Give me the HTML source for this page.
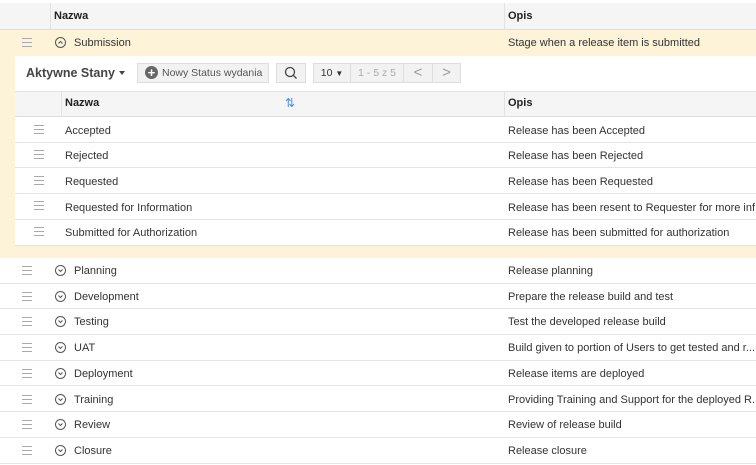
<!DOCTYPE html>
<html><head><style>
*{box-sizing:border-box;margin:0;padding:0}
body{width:756px;height:465px;background:#fff;font-family:"Liberation Sans",sans-serif;font-size:11px;color:#333;position:relative;overflow:hidden}
.a{position:absolute;white-space:nowrap}
.ham{position:absolute;width:10px;height:9px;border-top:1px solid #aaa;border-bottom:1px solid #aaa}
.ham:after{content:"";position:absolute;left:0;right:0;top:3px;border-top:1px solid #aaa}
.circ{position:absolute;width:11px;height:11px;border:1px solid #555;border-radius:50%}
.circ svg{position:absolute;left:1px;top:1px}
.row{position:absolute;left:0;width:756px;border-bottom:1px solid #e4e4e4}
.btn{position:absolute;border:1px solid #ddd;background:#f2f2f2;color:#555;font-size:10.5px;text-align:center;line-height:18px;white-space:nowrap;overflow:hidden}
.op{width:248px;overflow:hidden}
</style></head><body>
<div class="a" style="left:0;top:3px;width:756px;height:27px;background:#f5f5f5;border-bottom:1px solid #ddd"></div>
<div class="a" style="left:50px;top:3px;height:27px;border-left:1px solid #e2e2e2"></div>
<div class="a" style="left:504px;top:3px;height:27px;border-left:1px solid #e2e2e2"></div>
<div class="a" style="left:54px;top:10px;font-weight:bold;color:#222">Nazwa</div>
<div class="a" style="left:508px;top:10px;font-weight:bold;color:#222">Opis</div>

<div class="a" style="left:0;top:30px;width:756px;height:228px;background:#fcf3d9"></div>
<div class="ham" style="left:22px;top:38px"></div>
<div class="circ" style="left:55px;top:37px"><svg width="7" height="7"><path d="M1.5 4.5L3.5 2.5L5.5 4.5" stroke="#555" fill="none"/></svg></div>
<div class="a" style="left:74px;top:37px">Submission</div>
<div class="a" style="left:508px;top:37px">Stage when a release item is submitted</div>

<div class="a" style="left:15px;top:56px;width:741px;height:190px;background:#fff;border-bottom:1px solid #e0e0e0"></div>
<div class="a" style="left:26px;top:66px;font-size:12.5px;font-weight:bold;color:#444">Aktywne Stany</div>
<div class="a" style="left:119px;top:71px;border:3.5px solid transparent;border-top:4px solid #444"></div>
<div class="btn" style="left:137px;top:63px;width:132px;height:20px;text-align:left;padding-left:24px">Nowy Status wydania</div>
<div class="a" style="left:145px;top:66px;width:13px;height:13px;border-radius:50%;background:#666;color:#fff;font-size:13px;line-height:13px;text-align:center;font-weight:bold">+</div>
<div class="btn" style="left:276px;top:63px;width:30px;height:20px"><svg width="14" height="14" style="margin-top:2px"><circle cx="6" cy="6" r="4.5" stroke="#444" fill="none" stroke-width="1.3"/><path d="M9.5 9.5L12.5 12.5" stroke="#444" stroke-width="1.3"/></svg></div>
<div class="btn" style="left:313px;top:63px;width:38px;height:20px;color:#333">10 <span style="font-size:8px">▼</span></div>
<div class="btn" style="left:350px;top:63px;width:54px;height:20px;color:#aaa">1 - 5 z 5</div>
<div class="btn" style="left:403px;top:63px;width:30px;height:20px;color:#999;font-size:15px">&lt;</div>
<div class="btn" style="left:432px;top:63px;width:29px;height:20px;color:#999;font-size:15px">&gt;</div>

<div class="a" style="left:15px;top:91px;width:741px;height:26px;background:#f5f5f5;border-top:1px solid #e2e2e2;border-bottom:1px solid #ddd"></div>
<div class="a" style="left:61px;top:91px;height:26px;border-left:1px solid #e2e2e2"></div>
<div class="a" style="left:504px;top:91px;height:26px;border-left:1px solid #e2e2e2"></div>
<div class="a" style="left:65px;top:97px;font-weight:bold;color:#222">Nazwa</div>
<div class="a" style="left:285px;top:96px;color:#4a90e2;font-size:12px">⇅</div>
<div class="a" style="left:508px;top:97px;font-weight:bold;color:#222">Opis</div>

<div class="row" style="left:15px;width:741px;top:117px;height:26px"></div>
<div class="row" style="left:15px;width:741px;top:143px;height:25px"></div>
<div class="row" style="left:15px;width:741px;top:168px;height:26px"></div>
<div class="row" style="left:15px;width:741px;top:194px;height:26px"></div>
<div class="ham" style="left:34px;top:125px"></div><div class="a" style="left:65px;top:125px">Accepted</div><div class="a" style="left:508px;top:125px">Release has been Accepted</div>
<div class="ham" style="left:34px;top:150px"></div><div class="a" style="left:65px;top:150px">Rejected</div><div class="a" style="left:508px;top:150px">Release has been Rejected</div>
<div class="ham" style="left:34px;top:176px"></div><div class="a" style="left:65px;top:176px">Requested</div><div class="a" style="left:508px;top:176px">Release has been Requested</div>
<div class="ham" style="left:34px;top:201px"></div><div class="a" style="left:65px;top:202px">Requested for Information</div><div class="a op" style="left:508px;top:202px">Release has been resent to Requester for more inf...</div>
<div class="ham" style="left:34px;top:227px"></div><div class="a" style="left:65px;top:227px">Submitted for Authorization</div><div class="a" style="left:508px;top:227px">Release has been submitted for authorization</div>

<div id="outer"></div>
<script>
var d=[["Planning","Release planning"],["Development","Prepare the release build and test"],["Testing","Test the developed release build"],["UAT","Build given to portion of Users to get tested and r..."],["Deployment","Release items are deployed"],["Training","Providing Training and Support for the deployed R..."],["Review","Review of release build"],["Closure","Release closure"]];
var h="";
for(var i=0;i<d.length;i++){var t=258+i*25.7,c=t+13;
h+='<div class="row" style="top:'+t+'px;height:25.7px"></div>';
h+='<div class="ham" style="left:22px;top:'+(c-5)+'px"></div>';
h+='<div class="circ" style="left:55px;top:'+(c-6)+'px"><svg width="7" height="7"><path d="M1.5 2.5L3.5 4.5L5.5 2.5" stroke="#555" fill="none"/></svg></div>';
h+='<div class="a" style="left:74px;top:'+(c-6)+'px">'+d[i][0]+'</div><div class="a op" style="left:508px;top:'+(c-6)+'px">'+d[i][1]+'</div>';}
document.getElementById("outer").outerHTML=h;
</script>
</body></html>
